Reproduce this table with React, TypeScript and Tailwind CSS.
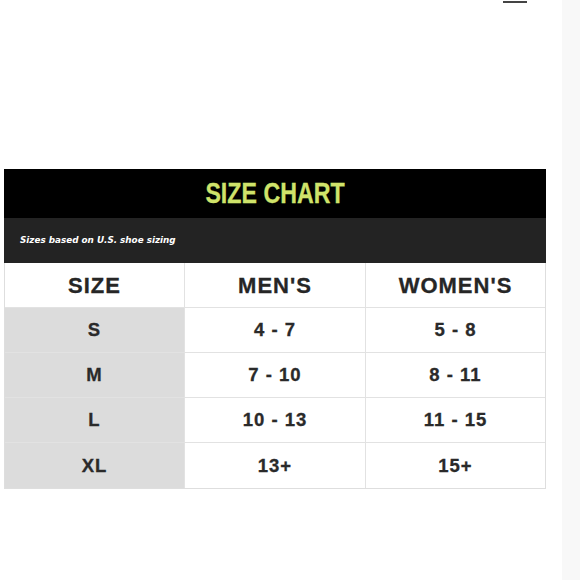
import React from "react";

const rows = [
  ["S", "4 - 7", "5 - 8"],
  ["M", "7 - 10", "8 - 11"],
  ["L", "10 - 13", "11 - 15"],
  ["XL", "13+", "15+"],
];

export default function App() {
  return (
    <div className="flex w-[580px] h-[580px] bg-white" style={{ fontFamily: '"Liberation Sans", Arial, sans-serif' }}>
      <div className="relative w-[562px] h-full">
        <div className="absolute left-[503px] top-[1px] w-[24px] h-[2px] bg-[#444]" />
        <div className="ml-[4px] mt-[169px] w-[542px]">
          <div className="h-[49px] bg-black flex items-center justify-center">
            <span className="inline-block scale-x-[0.8] text-[29px] font-bold text-[#cfe36a] leading-none [-webkit-text-stroke:0.3px_#cfe36a]">
              SIZE CHART
            </span>
          </div>
          <div className="h-[45px] bg-[#232323] flex items-center pl-[16px]">
            <span className="text-[8.8px] font-bold italic text-white" style={{ fontFamily: '"DejaVu Sans", sans-serif' }}>
              Sizes based on U.S. shoe sizing
            </span>
          </div>
          <div className="border-l border-r border-b border-[#dedede]">
            <div className="grid grid-cols-[180px_181px_1fr] h-[45px] border-b border-[#e2e2e2]">
              {["SIZE", "MEN'S", "WOMEN'S"].map((h, i) => (
                <div
                  key={h}
                  className={`flex items-center justify-center text-[22px] font-bold tracking-[1px] text-[#262626] [-webkit-text-stroke:0.3px_#262626] ${i < 2 ? "border-r border-[#e2e2e2]" : ""}`}
                >
                  {h}
                </div>
              ))}
            </div>
            {rows.map((r, ri) => (
              <div
                key={r[0]}
                className={`grid grid-cols-[180px_181px_1fr] h-[45px] ${ri < rows.length - 1 ? "border-b border-[#e2e2e2]" : ""}`}
              >
                <div className="flex items-center justify-center bg-[#dcdcdc] border-r border-[#e2e2e2] text-[18.5px] font-bold tracking-[1px] text-[#2a2a2a] [-webkit-text-stroke:0.3px_#2a2a2a]">
                  {r[0]}
                </div>
                <div className="flex items-center justify-center border-r border-[#e2e2e2] text-[18.5px] font-bold tracking-[1px] text-[#2a2a2a] [-webkit-text-stroke:0.3px_#2a2a2a]">
                  {r[1]}
                </div>
                <div className="flex items-center justify-center text-[18.5px] font-bold tracking-[1px] text-[#2a2a2a] [-webkit-text-stroke:0.3px_#2a2a2a]">
                  {r[2]}
                </div>
              </div>
            ))}
          </div>
        </div>
      </div>
      <div className="flex-1 h-full bg-[#f8f8f8]" />
    </div>
  );
}
